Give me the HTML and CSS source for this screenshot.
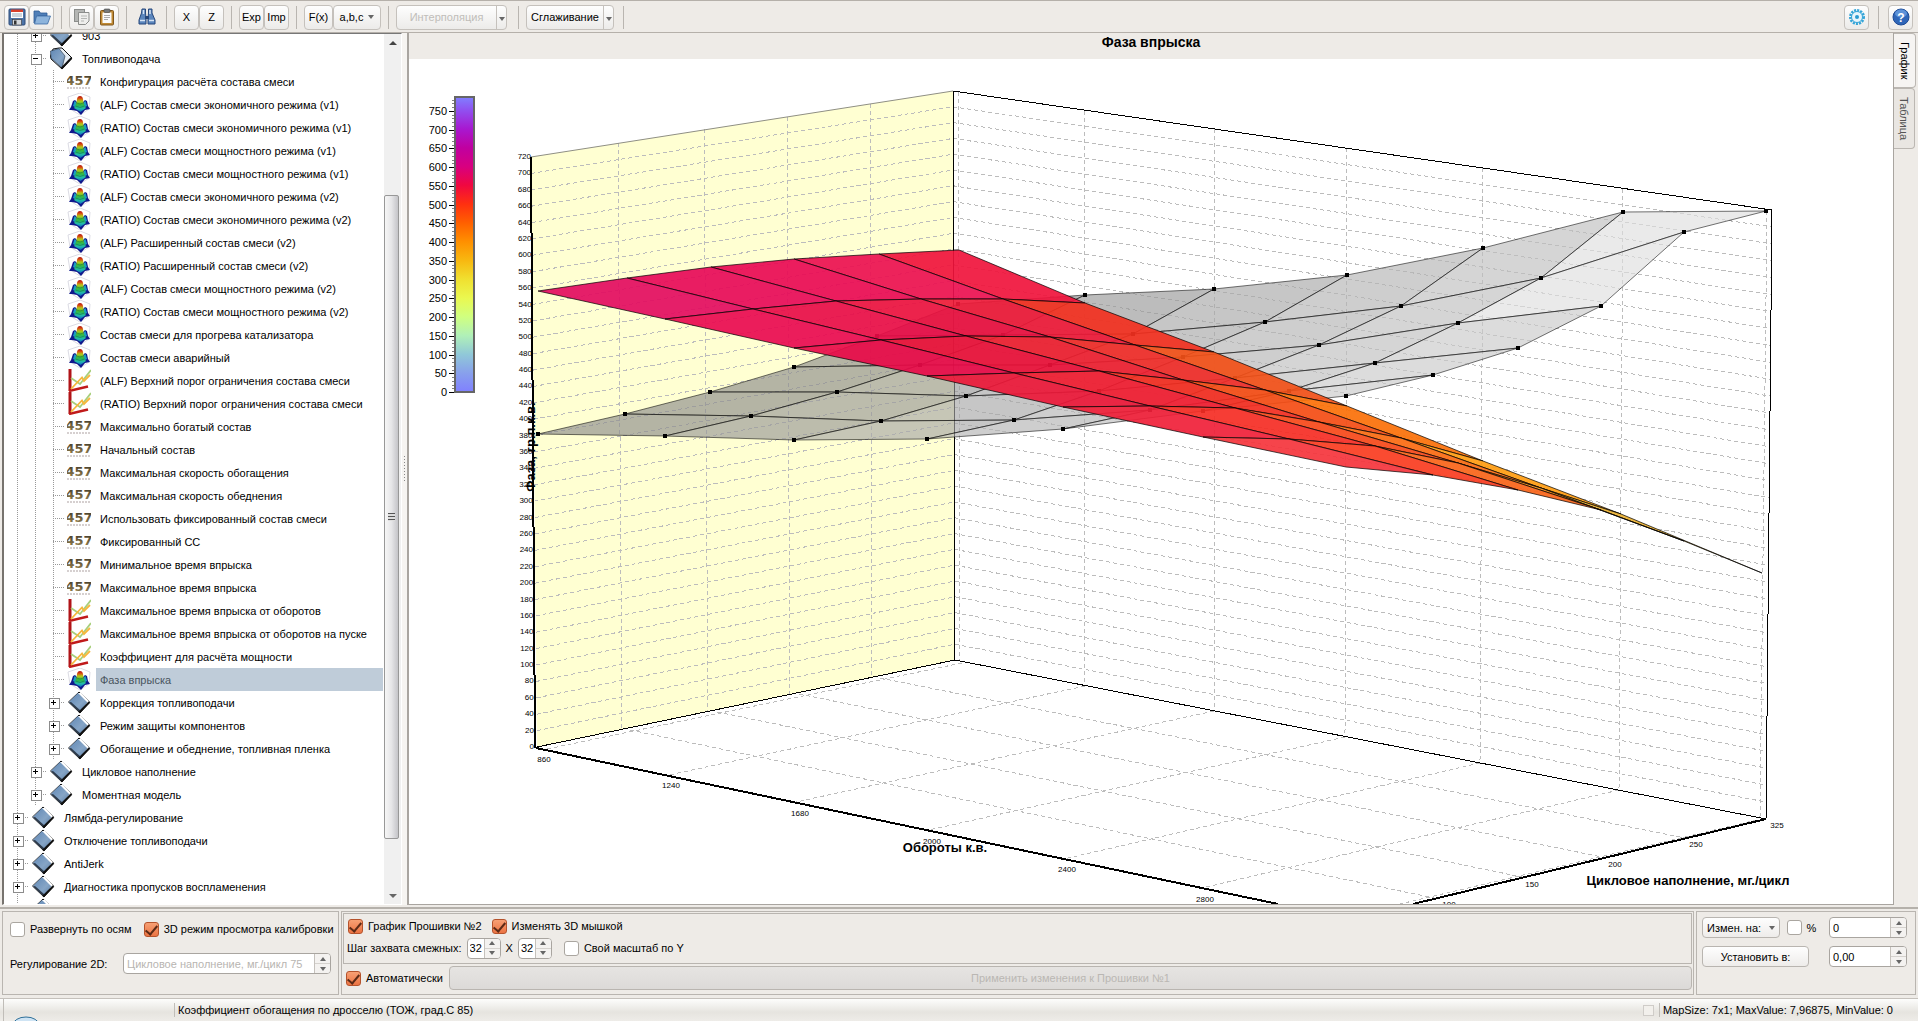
FILE: index.html
```html
<!DOCTYPE html>
<html lang="ru">

<head>
    <meta charset="UTF-8" />
    <title>Фаза впрыска</title>
    <link rel="stylesheet" href="styles.css">
</head>

<body>
    <svg class="defs" width="0" height="0">
        <defs>
            <linearGradient id="bookFill" x1="0" y1="0" x2="1" y2="1">
                <stop offset="0" stop-color="#5f87b5" />
                <stop offset="0.6" stop-color="#86a5c6" />
                <stop offset="1" stop-color="#5b7ea6" />
            </linearGradient>
            <linearGradient id="peakFill" x1="0" y1="0" x2="0" y2="1">
                <stop offset="0" stop-color="#b01010" />
                <stop offset="0.15" stop-color="#d84a10" />
                <stop offset="0.32" stop-color="#b8c818" />
                <stop offset="0.55" stop-color="#30b840" />
                <stop offset="0.8" stop-color="#20b8b0" />
                <stop offset="1" stop-color="#1060c0" />
            </linearGradient>
            <linearGradient id="numFill" x1="0" y1="0" x2="0" y2="1">
                <stop offset="0" stop-color="#3a3428" />
                <stop offset="1" stop-color="#a08850" />
            </linearGradient>
        </defs>
        <symbol id="i-book" viewBox="0 0 24 23">
            <path d="M1.500 11 L12 1 L23 11 L13 22 Z" fill="#fff" stroke="#111" stroke-width="1" />
            <path d="M2 11 L11 2 L20.500 11.500 L13 20.500 Z" fill="url(#bookFill)" />
            <path d="M2 11.500 L12.500 21.500 L13.500 19.500 L4 11 Z" fill="#2d3b4c" />
            <path d="M13 2 L22 11 L19.500 14" fill="none" stroke="#fff" stroke-width="1.500" />
            <path d="M12 21.500 L22.500 11" stroke="#111" stroke-width="2" fill="none" />
        </symbol>
        <symbol id="i-book-open" viewBox="0 0 24 23">
            <path d="M1.500 9 L4 2 L10 1 L13 1 L23 11 L13 22 L2 12 Z" fill="#e8eff6" stroke="#111" stroke-width="1" />
            <path d="M1.500 4 L10 1.500 L16 9 L13 21 L2 11 Z" fill="url(#bookFill)" stroke="#22303f" stroke-width="0.600" />
            <path d="M12.500 21.500 L22.500 11" stroke="#111" stroke-width="2" fill="none" />
        </symbol>
        <symbol id="i-map" viewBox="0 0 24 23">
            <path d="M1 4 L3 16 L13 22 L22 16 L23 4 L13 0 Z" fill="none" stroke="#dcdce4" stroke-width="1" />
            <path d="M2 17 L4 14 L6 8 L8 7 L10 9 L16 9 L18 7 L20 8 L21 13 L23 16 L18 17 L14 22 L10 18 L5 17 Z" fill="#10188c" />
            <path d="M6 13 L7.500 8 L9 9 L10 15 Z M20 13 L18.500 8 L17 9 L16 15 Z" fill="#18a0c0" />
            <path d="M7 15 Q9.500 12 10 6 Q10.500 3 13 3 Q15.500 3 16 6 Q16.500 12 19 15 L13.500 19 Z" fill="url(#peakFill)" />
            <path d="M9.500 10 Q13 12 16.500 10 M8.500 13 Q13 16 17.500 13" fill="none" stroke="#0a6a40" stroke-width="0.500" />
        </symbol>
        <symbol id="i-curve" viewBox="0 0 24 23">
            <path d="M3 0 V22" stroke="#b01418" stroke-width="3" />
            <path d="M2 22 L21 17.500" stroke="#c01a1a" stroke-width="2.500" />
            <path d="M4 9 L13 15 L24 1" fill="none" stroke="#a8cf7c" stroke-width="1.800" />
            <path d="M4 20 L15 8.500 L17 12 L23 6" fill="none" stroke="#f6b73c" stroke-width="1.800" />
        </symbol>
        <symbol id="i-num" viewBox="0 0 24 23">
            <text x="12" y="15" text-anchor="middle" class="num-text" fill="url(#numFill)">457</text>
            <path d="M0 18 H24" stroke="#d6d0d0" stroke-width="2" stroke-dasharray="2 1" />
        </symbol>
    </svg>

    <header class="toolbar">
        <button class="tool" aria-label="Сохранить">
            <svg width="18" height="18" viewBox="0 0 18 18"><rect x="1" y="1" width="16" height="16" rx="1" fill="#4d74a8" stroke="#2c4a78" /><rect x="3" y="2" width="12" height="8" fill="#fff" /><rect x="3" y="1.500" width="12" height="2.500" fill="#d8402c" /><path d="M4 6 H14 M4 8 H14" stroke="#9ab" /><rect x="4.500" y="11.500" width="9" height="5.500" fill="#d5d8dc" stroke="#333" stroke-width="0.600" /><rect x="6" y="12.500" width="2.500" height="4" fill="#333" /></svg>
        </button>
        <button class="tool" aria-label="Открыть">
            <svg width="18" height="18" viewBox="0 0 18 18"><path d="M1 15 V3 H6 L7.500 5 H14 V8 H5 Z" fill="#4f7fb8" stroke="#2d5c94" stroke-width="0.800" /><path d="M3.500 8 H17.500 L14.500 16 H1.500 Z" fill="#8db4dc" stroke="#3b6ba4" stroke-width="0.800" /></svg>
        </button>
        <i class="sep"></i>
        <button class="tool" aria-label="Копировать">
            <svg width="18" height="18" viewBox="0 0 18 18"><rect x="1.500" y="1.500" width="10" height="12" fill="#b4b6b4" stroke="#8b8d8b" /><path d="M5.500 4.500 H16 V13 L12.500 16.500 H5.500 Z" fill="#eeeeec" stroke="#8b8d8b" /><path d="M8 8 H14 M8 10.500 H14 M8 13 H11" stroke="#b4b6b4" /></svg>
        </button>
        <button class="tool" aria-label="Вставить">
            <svg width="18" height="18" viewBox="0 0 18 18"><rect x="2.500" y="2.500" width="13" height="14.500" rx="1" fill="#c08a34" stroke="#80561a" /><rect x="4.500" y="4.500" width="9" height="10.500" fill="#fafafa" /><rect x="6" y="1" width="6" height="3.500" rx="1" fill="#77797a" stroke="#444" stroke-width="0.600" /><path d="M6 7.500 H12 M6 9.500 H12 M6 11.500 H10" stroke="#aaa" /></svg>
        </button>
        <i class="sep"></i>
        <button class="tool flat" aria-label="Найти">
            <svg width="18" height="18" viewBox="0 0 18 18"><path d="M4 1 H7.500 V5 L8 10 V16 H1 V12 L3.500 5 Z M10.500 1 H14 V5 L17 12 V16 H10 V10 L10.500 5 Z" fill="#5b86bd" stroke="#27477a" /><path d="M7 8 H11 V11 H7 Z" fill="#27477a" /><path d="M2 12.500 H7 M11 12.500 H16 M5.500 2 V6 M12 2 V6" stroke="#d6e4f4" stroke-width="1.500" /></svg>
        </button>
        <i class="sep"></i>
        <button class="tool">X</button>
        <button class="tool">Z</button>
        <i class="sep"></i>
        <button class="tool">Exp</button>
        <button class="tool">Imp</button>
        <i class="sep"></i>
        <button class="tool wide">F(x)</button>
        <button class="tool menu">a,b,c <b class="arrow"></b></button>
        <i class="sep"></i>
        <span class="split long">
            <button disabled>Интерполяция</button>
            <button class="drop" aria-label="Вид интерполяции"><b class="arrow"></b></button>
        </span>
        <i class="sep"></i>
        <span class="split">
            <button>Сглаживание</button>
            <button class="drop" aria-label="Вид сглаживания"><b class="arrow"></b></button>
        </span>
        <i class="sep"></i>
        <span class="space"></span>
        <button class="tool" aria-label="Настройки">
            <svg width="18" height="18" viewBox="0 0 18 18"><circle cx="9" cy="9" r="6.500" fill="none" stroke="#35a5d8" stroke-width="3" stroke-dasharray="2 1" /><circle cx="9" cy="9" r="5.500" fill="#e9f5fb" stroke="#35a5d8" /><circle cx="9" cy="9" r="2" fill="#2b9ad0" /></svg>
        </button>
        <i class="sep help-sep"></i>
        <button class="tool" aria-label="Справка">
            <svg width="18" height="18" viewBox="0 0 18 18"><circle cx="9" cy="9" r="8" fill="#2f66b8" stroke="#1d4a94" /><ellipse cx="9" cy="5.500" rx="6" ry="4" fill="#5d92d8" /><text x="9" y="13.500" text-anchor="middle" class="help-text">?</text></svg>
        </button>
    </header>

    <main class="main">
        <nav class="tree-box">
            <div class="tree-view">
                <ul class="tree">
                    <li>
                        <ul>
                            <li><div class="row"><i class="exp plus"></i><svg><use href="#i-book" /></svg><span>903</span></div></li>
                            <li>
                                <div class="row"><i class="exp minus"></i><svg><use href="#i-book-open" /></svg><span>Топливоподача</span></div>
                                <ul>
                                    <li><div class="row"><i class="exp"></i><svg><use href="#i-num" /></svg><span>Конфигурация расчёта состава смеси</span></div></li>
                                    <li><div class="row"><i class="exp"></i><svg><use href="#i-map" /></svg><span>(ALF) Состав смеси экономичного режима (v1)</span></div></li>
                                    <li><div class="row"><i class="exp"></i><svg><use href="#i-map" /></svg><span>(RATIO) Состав смеси экономичного режима (v1)</span></div></li>
                                    <li><div class="row"><i class="exp"></i><svg><use href="#i-map" /></svg><span>(ALF) Состав смеси мощностного режима (v1)</span></div></li>
                                    <li><div class="row"><i class="exp"></i><svg><use href="#i-map" /></svg><span>(RATIO) Состав смеси мощностного режима (v1)</span></div></li>
                                    <li><div class="row"><i class="exp"></i><svg><use href="#i-map" /></svg><span>(ALF) Состав смеси экономичного режима (v2)</span></div></li>
                                    <li><div class="row"><i class="exp"></i><svg><use href="#i-map" /></svg><span>(RATIO) Состав смеси экономичного режима (v2)</span></div></li>
                                    <li><div class="row"><i class="exp"></i><svg><use href="#i-map" /></svg><span>(ALF) Расширенный состав смеси (v2)</span></div></li>
                                    <li><div class="row"><i class="exp"></i><svg><use href="#i-map" /></svg><span>(RATIO) Расширенный состав смеси (v2)</span></div></li>
                                    <li><div class="row"><i class="exp"></i><svg><use href="#i-map" /></svg><span>(ALF) Состав смеси мощностного режима (v2)</span></div></li>
                                    <li><div class="row"><i class="exp"></i><svg><use href="#i-map" /></svg><span>(RATIO) Состав смеси мощностного режима (v2)</span></div></li>
                                    <li><div class="row"><i class="exp"></i><svg><use href="#i-map" /></svg><span>Состав смеси для прогрева катализатора</span></div></li>
                                    <li><div class="row"><i class="exp"></i><svg><use href="#i-map" /></svg><span>Состав смеси аварийный</span></div></li>
                                    <li><div class="row"><i class="exp"></i><svg><use href="#i-curve" /></svg><span>(ALF) Верхний порог ограничения состава смеси</span></div></li>
                                    <li><div class="row"><i class="exp"></i><svg><use href="#i-curve" /></svg><span>(RATIO) Верхний порог ограничения состава смеси</span></div></li>
                                    <li><div class="row"><i class="exp"></i><svg><use href="#i-num" /></svg><span>Максимально богатый состав</span></div></li>
                                    <li><div class="row"><i class="exp"></i><svg><use href="#i-num" /></svg><span>Начальный состав</span></div></li>
                                    <li><div class="row"><i class="exp"></i><svg><use href="#i-num" /></svg><span>Максимальная скорость обогащения</span></div></li>
                                    <li><div class="row"><i class="exp"></i><svg><use href="#i-num" /></svg><span>Максимальная скорость обеднения</span></div></li>
                                    <li><div class="row"><i class="exp"></i><svg><use href="#i-num" /></svg><span>Использовать фиксированный состав смеси</span></div></li>
                                    <li><div class="row"><i class="exp"></i><svg><use href="#i-num" /></svg><span>Фиксированный СС</span></div></li>
                                    <li><div class="row"><i class="exp"></i><svg><use href="#i-num" /></svg><span>Минимальное время впрыска</span></div></li>
                                    <li><div class="row"><i class="exp"></i><svg><use href="#i-num" /></svg><span>Максимальное время впрыска</span></div></li>
                                    <li><div class="row"><i class="exp"></i><svg><use href="#i-curve" /></svg><span>Максимальное время впрыска от оборотов</span></div></li>
                                    <li><div class="row"><i class="exp"></i><svg><use href="#i-curve" /></svg><span>Максимальное время впрыска от оборотов на пуске</span></div></li>
                                    <li><div class="row"><i class="exp"></i><svg><use href="#i-curve" /></svg><span>Коэффициент для расчёта мощности</span></div></li>
                                    <li><div class="row selected"><i class="exp"></i><svg><use href="#i-map" /></svg><span>Фаза впрыска</span></div></li>
                                    <li><div class="row"><i class="exp plus"></i><svg><use href="#i-book" /></svg><span>Коррекция топливоподачи</span></div></li>
                                    <li><div class="row"><i class="exp plus"></i><svg><use href="#i-book" /></svg><span>Режим защиты компонентов</span></div></li>
                                    <li><div class="row"><i class="exp plus"></i><svg><use href="#i-book" /></svg><span>Обогащение и обеднение, топливная пленка</span></div></li>
                                </ul>
                            </li>
                            <li><div class="row"><i class="exp plus"></i><svg><use href="#i-book" /></svg><span>Цикловое наполнение</span></div></li>
                            <li><div class="row"><i class="exp plus"></i><svg><use href="#i-book" /></svg><span>Моментная модель</span></div></li>
                        </ul>
                    </li>
                    <li><div class="row"><i class="exp plus"></i><svg><use href="#i-book" /></svg><span>Лямбда-регулирование</span></div></li>
                    <li><div class="row"><i class="exp plus"></i><svg><use href="#i-book" /></svg><span>Отключение топливоподачи</span></div></li>
                    <li><div class="row"><i class="exp plus"></i><svg><use href="#i-book" /></svg><span>AntiJerk</span></div></li>
                    <li><div class="row"><i class="exp plus"></i><svg><use href="#i-book" /></svg><span>Диагностика пропусков воспламенения</span></div></li>
                    <li><div class="row"><i class="exp"></i><svg><use href="#i-book" /></svg></div></li>
                </ul>
            </div>
            <div class="scroll">
                <b class="arrow up"></b>
                <div class="track"><div class="thumb"><i></i></div></div>
                <b class="arrow"></b>
            </div>
        </nav>
        <div class="splitter"><i></i></div>
        <section class="chart-box">
            <h1 class="chart-title">Фаза впрыска</h1>
            <svg id="chart" class="chart" viewBox="409 59 1484 845"></svg>
        </section>
        <div class="tabs">
            <button class="tab active">График</button>
            <button class="tab">Таблица</button>
        </div>
    </main>

    <section class="bottom">
        <div class="panel view-panel">
            <div class="line">
                <label><input type="checkbox">Развернуть по осям</label>
                <label><input type="checkbox" checked>3D режим просмотра калибровки</label>
            </div>
            <div class="line">
                <label for="reg">Регулирование 2D:</label>
                <span class="spin reg">
                    <input id="reg" type="text" value="Цикловое наполнение, мг./цикл 75" disabled>
                    <span class="spin-btns"><button aria-label="Больше"></button><button aria-label="Меньше"></button></span>
                </span>
            </div>
        </div>
        <div class="panel edit-panel">
            <div class="group">
                <div class="line">
                    <label><input type="checkbox" checked>График Прошивки №2</label>
                    <label><input type="checkbox" checked>Изменять 3D мышкой</label>
                </div>
                <div class="line steps">
                    <label for="stepX">Шаг захвата смежных:</label>
                    <span class="spin small">
                        <input id="stepX" type="text" value="32">
                        <span class="spin-btns"><button aria-label="Больше"></button><button aria-label="Меньше"></button></span>
                    </span>
                    <label for="stepY">X</label>
                    <span class="spin small">
                        <input id="stepY" type="text" value="32">
                        <span class="spin-btns"><button aria-label="Больше"></button><button aria-label="Меньше"></button></span>
                    </span>
                    <label class="scale"><input type="checkbox">Свой масштаб по Y</label>
                </div>
            </div>
            <div class="line apply">
                <label><input type="checkbox" checked>Автоматически</label>
                <button class="btn" disabled>Применить изменения к Прошивки №1</button>
            </div>
        </div>
        <div class="panel set-panel">
            <div class="line">
                <button class="btn change">Измен. на: <b class="arrow"></b></button>
                <label class="percent"><input type="checkbox">%</label>
                <span class="spin value">
                    <input type="text" value="0" aria-label="Измен. на">
                    <span class="spin-btns"><button aria-label="Больше"></button><button aria-label="Меньше"></button></span>
                </span>
            </div>
            <div class="line">
                <button class="btn set">Установить в:</button>
                <span class="spin value">
                    <input type="text" value="0,00" aria-label="Установить в">
                    <span class="spin-btns"><button aria-label="Больше"></button><button aria-label="Меньше"></button></span>
                </span>
            </div>
        </div>
    </section>

    <footer class="status">
        <span class="cell logo"><svg width="28" height="5" viewBox="0 0 28 5"><ellipse cx="14" cy="9" rx="13" ry="8" fill="#cfe4f4" stroke="#2f7099" /></svg></span>
        <span class="cell">Коэффициент обогащения по дросселю (ТОЖ, град.С 85)</span>
        <span class="space"></span>
        <i class="box"></i>
        <span class="cell">MapSize: 7x1; MaxValue: 7,96875, MinValue: 0</span>
    </footer>
    <script src="chart.js"></script>
</body>

</html>
```
FILE: styles.css
```css
* {
    box-sizing: border-box;
    margin: 0;
    padding: 0;
}

body {
    display: flex;
    flex-direction: column;
    height: 100vh;
    overflow: hidden;
    background-color: #eeebe7;
    color: #000;
    font: 11px/14px "Liberation Sans", sans-serif;
}

button, input {
    font: inherit;
    color: inherit;
}

ul {
    list-style: none;
}

.defs {
    position: absolute;
}

.space {
    flex: 1;
}

.arrow {
    display: inline-block;
    border: 4px solid transparent;
    border-top-color: #666;
    border-bottom: 0;
}

.arrow.up {
    border-top: 0;
    border-bottom: 4px solid #444;
}

/* toolbar */
.toolbar {
    display: flex;
    align-items: center;
    height: 33px;
    flex-shrink: 0;
    padding: 1px 5px 0 4px;
    border-top: 1px solid #b5b0aa;
    border-bottom: 1px solid #b5b0aa;
}

.tool, .split {
    display: flex;
    align-items: center;
    justify-content: center;
    width: 25px;
    height: 25px;
    border: 1px solid #c5c1bc;
    border-radius: 4px;
    background-image: linear-gradient(#fefefe, #ecebe9);
}

.tool.flat {
    border-color: transparent;
    background: none;
}

.tool.wide {
    width: 29px;
}

.tool.menu {
    width: 48px;
    gap: 5px;
}

.sep {
    width: 1px;
    height: 23px;
    margin: 0 7px;
    background-color: #b9b5b0;
}

.help-sep {
    margin: 0 9px;
}

.split {
    width: 88px;
    margin-right: 2px;
}

.split.long {
    width: 111px;
    margin-right: 4px;
}

.split button {
    flex: 1;
    height: 23px;
    border: 0;
    background: none;
}

.split button:disabled {
    color: #c0bdb9;
}

.split .drop {
    flex: 0 0 10px;
    border-left: 1px solid #c5c1bc;
}

.drop .arrow, .menu .arrow {
    border-width: 4px 3px 0;
}

.help-text {
    font: bold 12px "Liberation Sans", sans-serif;
    fill: #fff;
}

/* main area */
.main {
    display: flex;
    flex: 1;
    min-height: 0;
    padding: 0 2px 2px;
}

.tree-box {
    display: flex;
    width: 400px;
    border: 1px solid #fff;
    border-top-color: #777;
    border-left: 2px solid #77736e;
    background-color: #fff;
}

.tree-view {
    flex: 1;
    overflow: hidden;
    padding-left: 4px;
}

.tree {
    margin-top: -10px;
}

.tree, .tree ul {
    background: repeating-linear-gradient(#999 0 1px, transparent 1px 2px) 9px 0 / 1px 100% no-repeat;
}

.tree ul {
    padding-left: 18px;
    background-position: 27px 0;
}

.row {
    display: flex;
    align-items: center;
    height: 23px;
    white-space: nowrap;
}

.row svg {
    width: 24px;
    height: 23px;
    overflow: visible;
}

.row span {
    flex: 1;
    margin-left: 5px;
    margin-right: 1px;
    padding: 2px 0 0 4px;
    line-height: 21px;
}

.row.selected span {
    background-color: #bfccd9;
    color: #4a5560;
}

.exp {
    display: flex;
    width: 23px;
    height: 23px;
    padding: 7px 0 0 5px;
    background: repeating-linear-gradient(90deg, #999 0 1px, transparent 1px 2px) 9px 11px / 12px 1px no-repeat;
}

.exp.plus::before, .exp.minus::before {
    content: "";
    width: 9px;
    height: 9px;
    border: 1px solid #8c8c8c;
    background: linear-gradient(#000, #000) 1px 3px / 5px 1px no-repeat, #fff;
}

.exp.plus::before {
    background: linear-gradient(#000, #000) 1px 3px / 5px 1px no-repeat, linear-gradient(#000, #000) 3px 1px / 1px 5px no-repeat, #fff;
}

.num-text {
    font: bold 13px "DejaVu Sans", sans-serif;
}

.scroll {
    display: flex;
    flex-direction: column;
    align-items: center;
    width: 17px;
    padding: 7px 0 6px;
    background-color: #f0f0f0;
}

.track {
    flex: 1;
    width: 100%;
    margin: 3px 0 2px;
    padding: 147px 2px 53px 0;
}

.thumb {
    display: flex;
    align-items: center;
    justify-content: center;
    height: 100%;
    border: 1px solid #989898;
    border-radius: 2px;
    background-image: linear-gradient(90deg, #f6f6f6, #e6e6e8 50%, #c4c4c8);
}

.thumb i {
    width: 7px;
    height: 8px;
    background: repeating-linear-gradient(#555 0 1px, #ddd 1px 3px);
}

.splitter {
    display: flex;
    align-items: center;
    justify-content: center;
    width: 5px;
    background-color: #f6f4f1;
}

.splitter i {
    width: 1px;
    height: 26px;
    background: repeating-linear-gradient(#888 0 1px, transparent 1px 3px);
}

.chart-box {
    display: flex;
    flex: 1;
    flex-direction: column;
    min-width: 0;
    border: solid #a9a5a0;
    border-width: 0 1px 1px 2px;
}

.chart-title {
    height: 26px;
    font: bold 14px/18px "Liberation Sans", sans-serif;
    text-align: center;
}

.chart {
    flex: 1;
    min-height: 0;
    background-color: #fff;
    font-size: 8px;
}

.grid {
    stroke: #bcbcbc;
    stroke-dasharray: 4 3;
    fill: none;
}

.edge {
    stroke: #000;
    fill: none;
}

.left-wall {
    fill: #ffffd2;
}

.scale-text {
    font-size: 11px;
}

.axis-title {
    font-size: 13px;
    font-weight: bold;
}

.tabs {
    width: 22px;
}

.tab {
    display: block;
    width: 21px;
    height: 61px;
    padding: 8px 0;
    border: 1px solid #bbb7b2;
    border-left: 0;
    border-radius: 0 4px 4px 0;
    background-color: #e9e6e2;
    color: #555;
    text-align: left;
    writing-mode: vertical-rl;
}

.tab.active {
    width: 22px;
    height: 55px;
    background-color: #f6f4f2;
    color: #000;
}

/* bottom panels */
.bottom {
    display: flex;
    flex-shrink: 0;
    gap: 2px;
    height: 92px;
    padding: 2px 2px 3px;
    border-top: 2px solid #b5b1ab;
    border-bottom: 1px solid #c5c1bc;
}

.panel {
    border: 1px solid #b9b5b0;
}

.line {
    display: flex;
    align-items: center;
    white-space: nowrap;
}

label {
    display: flex;
    align-items: center;
}

input[type="checkbox"] {
    appearance: none;
    width: 15px;
    height: 15px;
    margin-right: 5px;
    border: 1px solid #aaa6a0;
    border-radius: 3px;
    background-color: #fff;
}

input[type="checkbox"]:checked {
    display: flex;
    justify-content: center;
    border-color: #b5532c;
    background-image: linear-gradient(#f7a074, #ec7443);
}

input[type="checkbox"]:checked::before {
    content: "";
    width: 5px;
    height: 10px;
    border: solid #5c2a16;
    border-width: 0 2px 2px 0;
    transform: rotate(40deg);
}

.spin {
    display: flex;
    height: 21px;
    border: 1px solid #a9a5a0;
    border-radius: 4px;
    background-color: #fff;
    overflow: hidden;
}

.spin input {
    flex: 1;
    min-width: 0;
    padding-left: 3px;
    border: 0;
    background: none;
}

.spin input:disabled {
    color: #b8b5b1;
}

.spin-btns {
    display: flex;
    flex-direction: column;
    width: 16px;
    border-left: 1px solid #c5c1bc;
    background-color: #f4f2f0;
}

.spin-btns button {
    display: flex;
    flex: 1;
    align-items: center;
    justify-content: center;
    border: 0;
    background: none;
}

.spin-btns button:first-child {
    border-bottom: 1px solid #d5d2ce;
}

.spin-btns button::before {
    content: "";
    border: 3px solid transparent;
    border-top: 0;
    border-bottom: 4px solid #666;
}

.spin-btns button:last-child::before {
    border-top: 4px solid #666;
    border-bottom: 0;
}

.btn {
    height: 21px;
    border: 1px solid #b9b5b0;
    border-radius: 4px;
    background-image: linear-gradient(#fefefe, #eeecea);
}

.btn:disabled {
    background-image: linear-gradient(#e6e4e2, #dcdad8);
    color: #bab7b3;
}

.view-panel {
    width: 337px;
    padding: 8px 7px;
}

.view-panel .line {
    gap: 12px;
    height: 18px;
}

.view-panel .line + .line {
    justify-content: space-between;
    height: 21px;
    margin-top: 15px;
}

.reg {
    width: 208px;
}

.edit-panel {
    flex: 1;
    padding: 1px;
}

.group {
    height: 51px;
    padding: 2px 3px 0;
    border: 1px solid #b9b5b0;
}

.group .line {
    gap: 10px;
    height: 20px;
    padding-left: 1px;
}

.group .steps {
    gap: 5px;
    height: 22px;
    margin-top: 1px;
    padding-left: 0;
}

.small {
    width: 34px;
}

.small input {
    padding-left: 2px;
}

.scale {
    margin-left: 7px;
}

.apply {
    gap: 6px;
    padding: 2px 0 0 3px;
}

.apply .btn {
    flex: 1;
    height: 24px;
}

.set-panel {
    width: 220px;
    padding: 5px 8px 0 5px;
}

.set-panel .line {
    height: 21px;
    margin-bottom: 8px;
    justify-content: space-between;
}

.change {
    display: flex;
    align-items: center;
    justify-content: space-between;
    width: 78px;
    padding: 0 4px;
}

.change .arrow {
    border-width: 4px 3px 0;
}

.set {
    width: 107px;
}

.percent {
    margin-right: 6px;
}

.value {
    width: 78px;
}

/* status bar */
.status {
    display: flex;
    flex-shrink: 0;
    align-items: center;
    height: 22px;
    padding: 0 25px 0 3px;
    background-image: linear-gradient(#fdfdfc, #e6e4df 60%, #eeece8);
}

.cell {
    padding-left: 3px;
    border-left: 1px solid #c0bdb8;
}

.logo {
    display: flex;
    align-items: flex-end;
    width: 171px;
    height: 22px;
    padding-left: 8px;
}

.box {
    width: 11px;
    height: 11px;
    margin-right: 5px;
    border: 1px solid #cfccc8;
    background-color: #f2f0ec;
}
```
FILE: chart.js
```js
var NS = 'http://www.w3.org/2000/svg';
var chart = document.getElementById('chart');

function add(tag, attrs, text) {
    var el = document.createElementNS(NS, tag);
    for (var key in attrs) {
        el.setAttribute(key, attrs[key]);
    }
    if (text !== undefined) {
        el.textContent = text;
    }
    chart.appendChild(el);
    return el;
}

function line(a, b, cls, width) {
    add('line', {
        x1: a[0], y1: a[1], x2: b[0], y2: b[1],
        'class': cls,
        'stroke-width': width || 1,
        'shape-rendering': 'crispEdges'
    });
}

function label(x, y, text, cls, anchor) {
    return add('text', { x: x, y: y, 'class': cls || '', 'text-anchor': anchor || 'middle' }, text);
}

//углы стен
var leftTop = [531, 157], leftBottom = [537, 747];
var backTop = [953, 91], backBottom = [955, 660];
var rightTop = [1772, 210], rightBottom = [1766, 819];

add('polygon', { points: [leftTop, backTop, backBottom, leftBottom].join(' '), 'class': 'left-wall' });

//горизонтальная сетка, шаг 20
for (var i = 1; i < 36; i++) {
    var k = i / 36;
    var l = [leftTop[0] + 6 * k, leftTop[1] + 590 * k];
    var b = [backTop[0] + 2 * k, backTop[1] + 569 * k];
    var r = [rightTop[0] - 6 * k, rightTop[1] + 609 * k];
    line(l, b, 'grid');
    line(b, r, 'grid');
}

//вертикальная сетка
[
    [618, 143, 622, 729], [704, 129, 708, 712], [787, 117, 790, 694], [870, 104, 872, 677],
    [958, 92, 960, 661], [1084, 111, 1085, 686], [1214, 129, 1214, 711], [1347, 148, 1345, 737],
    [1483, 168, 1480, 763], [1623, 189, 1619, 790], [1767, 211, 1760, 818]
].forEach(function(v) {
    line([v[0], v[1]], [v[2], v[3]], 'grid');
});

//пол
[
    [880, 678, 1685, 838], [799, 694, 1607, 858], [717, 712, 1522, 877], [630, 730, 1434, 898],
    [547, 749, 962, 663], [1757, 820, 1400, 904],
    [1085, 686, 669, 775], [1214, 711, 796, 802], [1345, 737, 929, 830], [1480, 763, 1064, 859], [1619, 790, 1202, 888]
].forEach(function(v) {
    line([v[0], v[1]], [v[2], v[3]], 'grid');
});

//рёбра
add('line', { x1: 531, y1: 157, x2: 953, y2: 91, stroke: '#8f8f84' });
line(backTop, backBottom, 'edge', 1);
line(backTop, rightTop, 'edge', 1);
line(rightTop, rightBottom, 'edge', 1);
line(backBottom, rightBottom, 'edge', 1);
line(leftBottom, backBottom, 'edge', 1);
line(leftTop, [535, 748], 'edge', 2);
line([536, 748], [1278, 904], 'edge', 2);
line(rightBottom, [1413, 904], 'edge', 2);

//поверхности: строки по наполнению, столбцы по оборотам
var gray = [
    [[538, 434], [665, 436], [794, 440], [927, 439], [1063, 429], [1203, 411], [1346, 396]],
    [[625, 414], [751, 416], [881, 421], [1014, 420], [1150, 410], [1289, 391], [1433, 375]],
    [[710, 392], [837, 392], [966, 396], [1099, 391], [1235, 378], [1375, 363], [1518, 348]],
    [[794, 367], [920, 365], [1050, 365], [1183, 357], [1319, 345], [1458, 323], [1601, 306]],
    [[877, 336], [1003, 335], [1133, 334], [1265, 322], [1401, 306], [1541, 278], [1684, 232]],
    [[958, 304], [1085, 295], [1214, 289], [1347, 275], [1483, 248], [1623, 212], [1766, 211]]
];
var red = [
    [[538, 291], [665, 319], [794, 348], [927, 376], [1063, 407], [1203, 437], [1346, 467]],
    [[627, 278], [753, 309], [881, 340], [1014, 373], [1150, 406], [1289, 439], [1433, 475]],
    [[711, 267], [836, 301], [966, 336], [1099, 371], [1235, 408], [1375, 446], [1518, 490]],
    [[794, 259], [921, 299], [1050, 337], [1183, 380], [1319, 422], [1458, 463], [1601, 510]],
    [[879, 254], [1003, 299], [1135, 345], [1265, 390], [1401, 438], [1541, 488], [1684, 541]],
    [[959, 250], [1085, 303], [1214, 352], [1347, 406], [1483, 461], [1621, 514], [1762, 573]]
];
var grayFill = ['#8c8c8c', '#989898', '#a8a8a8', '#b4b4b4', '#bebebe', '#cacaca'];
var redFill = [
    ['#e30c60', '#e90a50', '#e80a48', '#ec1838', '#f02038', '#f5343c'],
    ['#e70a58', '#e80c48', '#ea1038', '#f01c30', '#f52c24', '#fa3c20'],
    ['#e90a54', '#ea1040', '#ee2030', '#f22c20', '#f64818', '#f86418'],
    ['#ec1050', '#ee1a38', '#f02c28', '#f44c14', '#fa6a10', '#f89018'],
    ['#f0143c', '#f23020', '#f25018', '#fb7008', '#ff9c10', '#eab030']
];

function surface(points, fill, opacity, lineOpacity) {
    for (var z = 4; z >= 0; z--) {
        for (var x = 0; x < 6; x++) {
            add('polygon', {
                points: [points[z][x], points[z][x + 1], points[z + 1][x + 1], points[z + 1][x]].join(' '),
                fill: fill(z, x),
                'fill-opacity': opacity,
                stroke: '#000',
                'stroke-opacity': lineOpacity,
                'stroke-width': 1,
                'stroke-linejoin': 'bevel'
            });
        }
    }
}

surface(gray, function(z, x) {
    if (x === 5 && z > 2) {
        return '#dedede';
    }
    return grayFill[x];
}, 0.65, 0.55);
gray.forEach(function(row) {
    row.forEach(function(p) {
        add('rect', { x: p[0] - 2, y: p[1] - 2, width: 4, height: 4 });
    });
});
surface(red, function(z, x) {
    return redFill[z][x];
}, 0.92, 0.7);

//подписи осей
for (var v = 0; v <= 720; v += 20) {
    label(534 - v / 240, 749 - v * 590 / 720, v, '', 'end');
}
[
    [544, 762, 860], [671, 788, 1240], [800, 816, 1680], [932, 844, 2000], [1067, 872, 2400], [1205, 902, 2800],
    [1777, 828, 325], [1696, 847, 250], [1615, 867, 200], [1532, 887, 150], [1449, 907, 100]
].forEach(function(t) {
    label(t[0], t[1], t[2]);
});
label(945, 852, 'Обороты к.в.', 'axis-title');
label(1688, 885, 'Цикловое наполнение, мг./цикл', 'axis-title');
label(0, 0, 'Фаза, гр.п.к.в.', 'axis-title').setAttribute('transform', 'translate(535 447) rotate(-90)');

//цветовая шкала
var colors = ['#8080ff', '#88a0ec', '#90c8d8', '#b0f0b8', '#d0ff80', '#eaf850', '#f0e030', '#f8b810', '#ff9000',
    '#ff6000', '#ff3010', '#f00840', '#d80080', '#c000a0', '#a818d0', '#9050f0', '#8080ff'];
var grad = add('linearGradient', { id: 'scaleFill', x1: 0, y1: 1, x2: 0, y2: 0 });
colors.forEach(function(c, n) {
    var stop = document.createElementNS(NS, 'stop');
    stop.setAttribute('offset', Math.min(n * 50 / 785, 1));
    stop.setAttribute('stop-color', c);
    grad.appendChild(stop);
});
add('rect', { x: 455, y: 97, width: 19, height: 295, fill: 'url(#scaleFill)', stroke: '#666', 'stroke-width': 2 });
for (var s = 0; s <= 780; s += 10) {
    var y = Math.round(392 - s * 0.375);
    line([s % 50 ? 452 : 449, y], [454, y], 'edge', s % 50 ? 0.5 : 1);
    if (s % 50 === 0) {
        label(447, y + 4, s, 'scale-text', 'end');
    }
}
```
